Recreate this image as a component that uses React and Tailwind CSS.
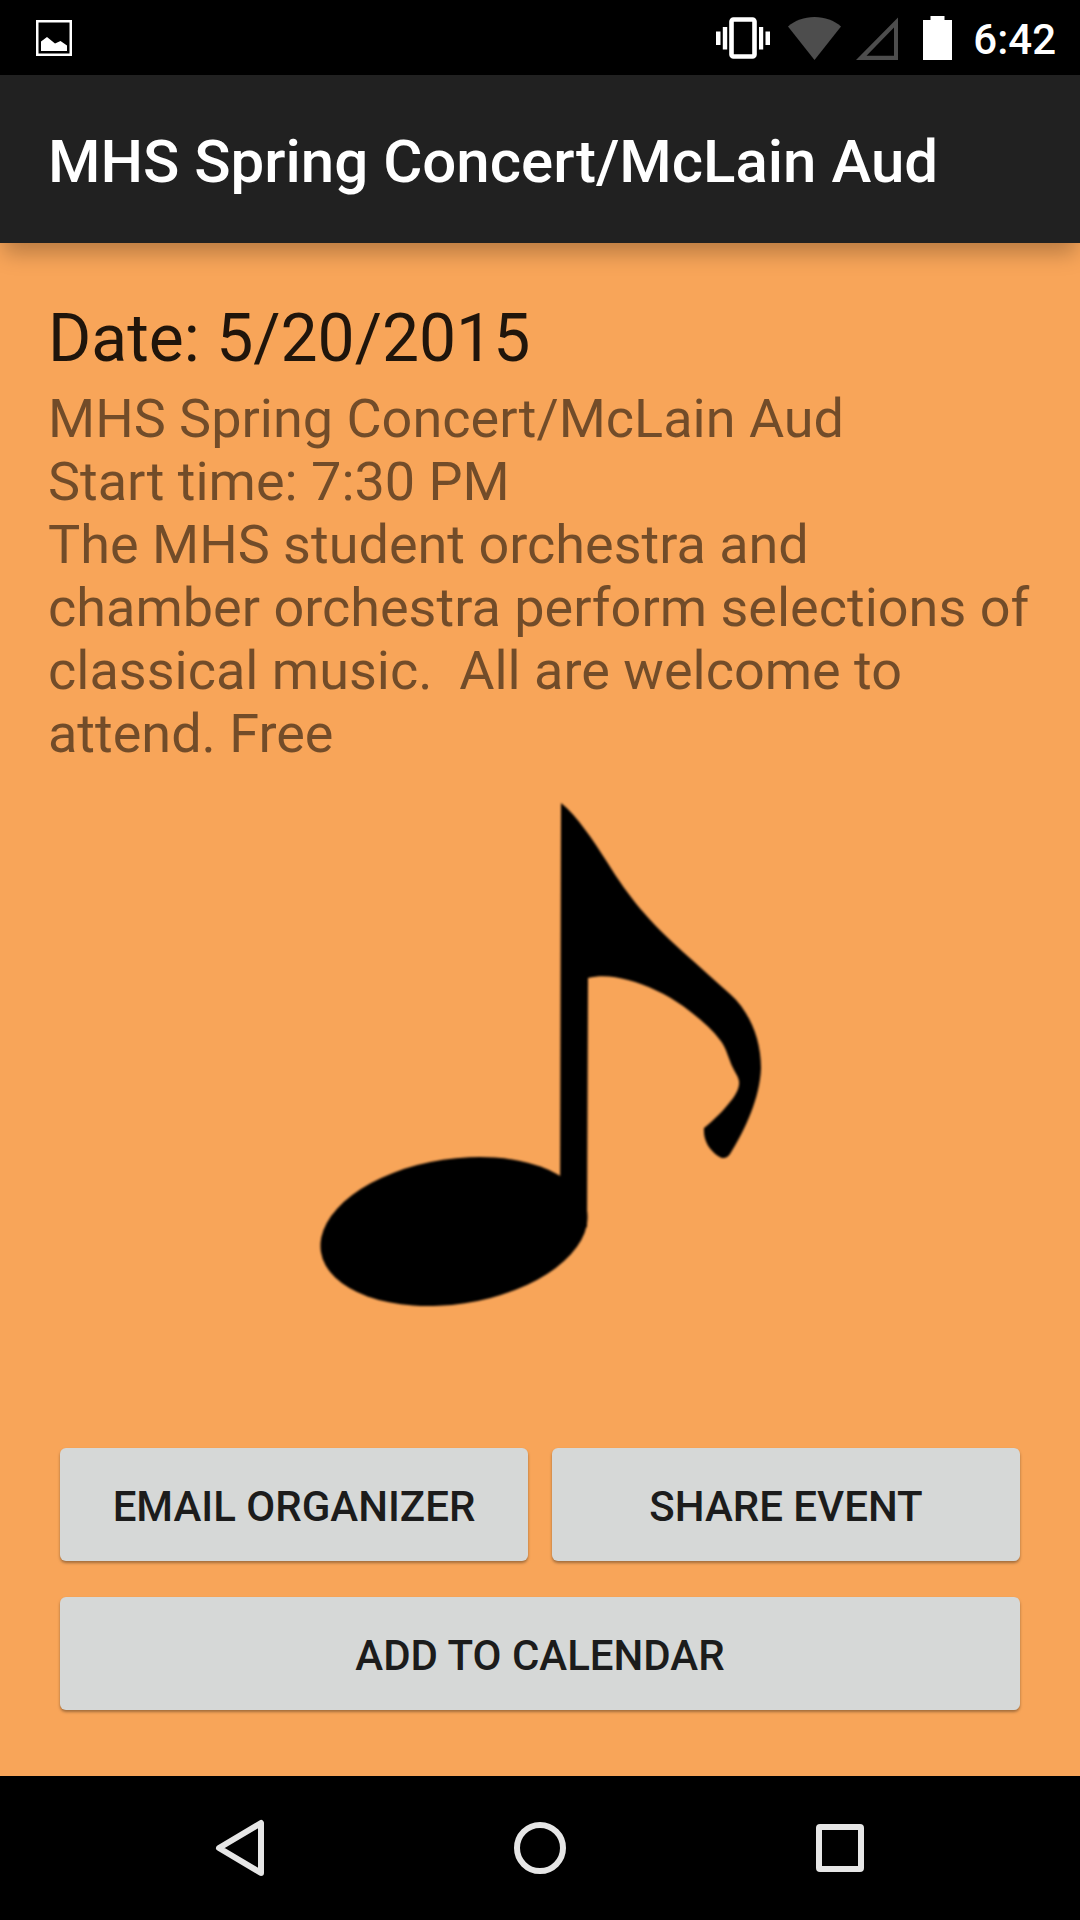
import React from "react";

function PictureIcon() {
  return (
    <svg className="h-9 w-9" viewBox="0 0 36 36" role="img" aria-label="Picture saved">
      <rect x="1.25" y="1.25" width="33.5" height="33.5" fill="none" stroke="#fff" strokeWidth="2.5" />
      <path fill="#fff" d="M5 31V21.5L11 17l8 6.5 5.5-2.5 6.5 4.5V31z" />
    </svg>
  );
}

function VibrateIcon() {
  return (
    <svg className="h-11 w-[54px]" viewBox="0 0 54 44" role="img" aria-label="Vibrate">
      <rect x="15.5" y="3.5" width="23" height="37" rx="2" fill="none" stroke="#fff" strokeWidth="4.6" />
      <path fill="#fff" d="M0 15.5h4.5V29H0zM6.8 11h4.4v22.500H6.800zM43 11h4.200v22.500H43zM49.500 15.500H54V29h-4.500z" />
    </svg>
  );
}

function WifiIcon() {
  return (
    <svg className="ml-[18px] h-11 w-[53px]" viewBox="0 0 53 44" role="img" aria-label="Wi-Fi">
      <path fill="#4d4d4d" d="M26.500 44L0 10.500C7 4.500 16 1 26.500 1S46 4.500 53 10.500z" />
    </svg>
  );
}

function SignalIcon() {
  return (
    <svg className="ml-[15px] h-11 w-[42px]" viewBox="0 0 42 44" role="img" aria-label="No signal">
      <path fill="#4d4d4d" fillRule="evenodd" d="M42 1.500V44H0zM38 11.500L10.500 39.700H38z" />
    </svg>
  );
}

function BatteryIcon() {
  return (
    <svg className="ml-[25px] h-11 w-[29px]" viewBox="0 0 29 44" role="img" aria-label="Battery full">
      <path fill="#fff" d="M7.500 0h14v4H29v40H0V4h7.500z" />
    </svg>
  );
}

function StatusBar() {
  return (
    <div className="flex h-[75px] items-center bg-black pl-9 pr-6 text-white">
      <PictureIcon />
      <div className="ml-auto flex items-center">
        <VibrateIcon />
        <WifiIcon />
        <SignalIcon />
        <BatteryIcon />
        <time className="ml-[21px] pt-1 text-[42px] leading-[49px] font-medium">6:42</time>
      </div>
    </div>
  );
}

function MusicNote() {
  return (
    <svg
      className="mx-auto mt-9 h-[506px] w-[442px] blur-[1px]"
      viewBox="19 21 442 506"
      overflow="visible"
      role="img"
      aria-label="Eighth note"
      fill="#000"
    >
      <ellipse cx="154" cy="451.5" rx="134.6" ry="72.500" transform="rotate(-8.600 154 451.500)" />
      <path d="M261 23C277 36 293 60 307 82C330 119 348 140 383 172C400 187 415 201 430 214C449 231 461 258 461 288C460 318 445 350 430 374C427 379 422 379 418 376C409 370 403 360 404 348C414 340 424 330 430 322C436 315 440 307 439 301C438 295 433 290 430 281C427 273 425 266 420 260C412 249 398 237 383 226C366 214 347 205 328 200C314 196 300 195 288 198L287 447L260 455z" />
    </svg>
  );
}

function ActionButton({ children, wide }) {
  return (
    <button
      type="button"
      className={
        "flex h-[113px] items-center justify-center rounded-md bg-[#d6d8d7] pt-1 text-[42px] leading-[49px] font-medium text-[#1c1c1c] uppercase shadow-[0_2px_3px_rgba(0,0,0,0.35)] " +
        (wide ? "col-span-2" : "")
      }
    >
      {children}
    </button>
  );
}

function NavButton({ label, children }) {
  return (
    <button type="button" aria-label={label} className="flex h-full flex-1 items-center justify-center">
      <svg className="h-[60px] w-[60px]" viewBox="0 0 60 60" fill="none" stroke="#e6e6e6" strokeWidth="6" strokeLinejoin="round">
        {children}
      </svg>
    </button>
  );
}

export default function App() {
  return (
    <div className="flex min-h-screen flex-col bg-[#f8a559] font-['Roboto',sans-serif]">
      <StatusBar />
      <header className="flex h-[168px] items-center bg-[#212121] px-12 pt-1.5 shadow-[0_14px_20px_-4px_rgba(0,0,0,0.25)]">
        <h1 className="text-[60px] leading-[70px] font-medium text-white">MHS Spring Concert/McLain Aud</h1>
      </header>

      <main className="flex flex-1 flex-col px-12 pt-[57px]">
        <h2 className="text-[66px] leading-[78px] text-black/87">Date: 5/20/2015</h2>
        <p className="mt-[9px] text-[54px] leading-[63px] whitespace-pre-wrap text-black/54">
          {
            "MHS Spring Concert/McLain Aud\nStart time: 7:30 PM\nThe MHS student orchestra and chamber orchestra perform selections of classical music.  All are welcome to attend. Free"
          }
        </p>
        <MusicNote />
        <div className="mt-auto grid grid-cols-2 gap-x-6 gap-y-9 px-3 pb-[66px]">
          <ActionButton>Email Organizer</ActionButton>
          <ActionButton>Share Event</ActionButton>
          <ActionButton wide>Add to Calendar</ActionButton>
        </div>
      </main>

      <nav className="flex h-36 items-center bg-black px-[90px]">
        <NavButton label="Back">
          <path d="M51 5v50L9 30z" />
        </NavButton>
        <NavButton label="Home">
          <circle cx="30" cy="30" r="23" />
        </NavButton>
        <NavButton label="Recent apps">
          <rect x="9" y="9" width="42" height="42" rx="1" />
        </NavButton>
      </nav>
    </div>
  );
}
